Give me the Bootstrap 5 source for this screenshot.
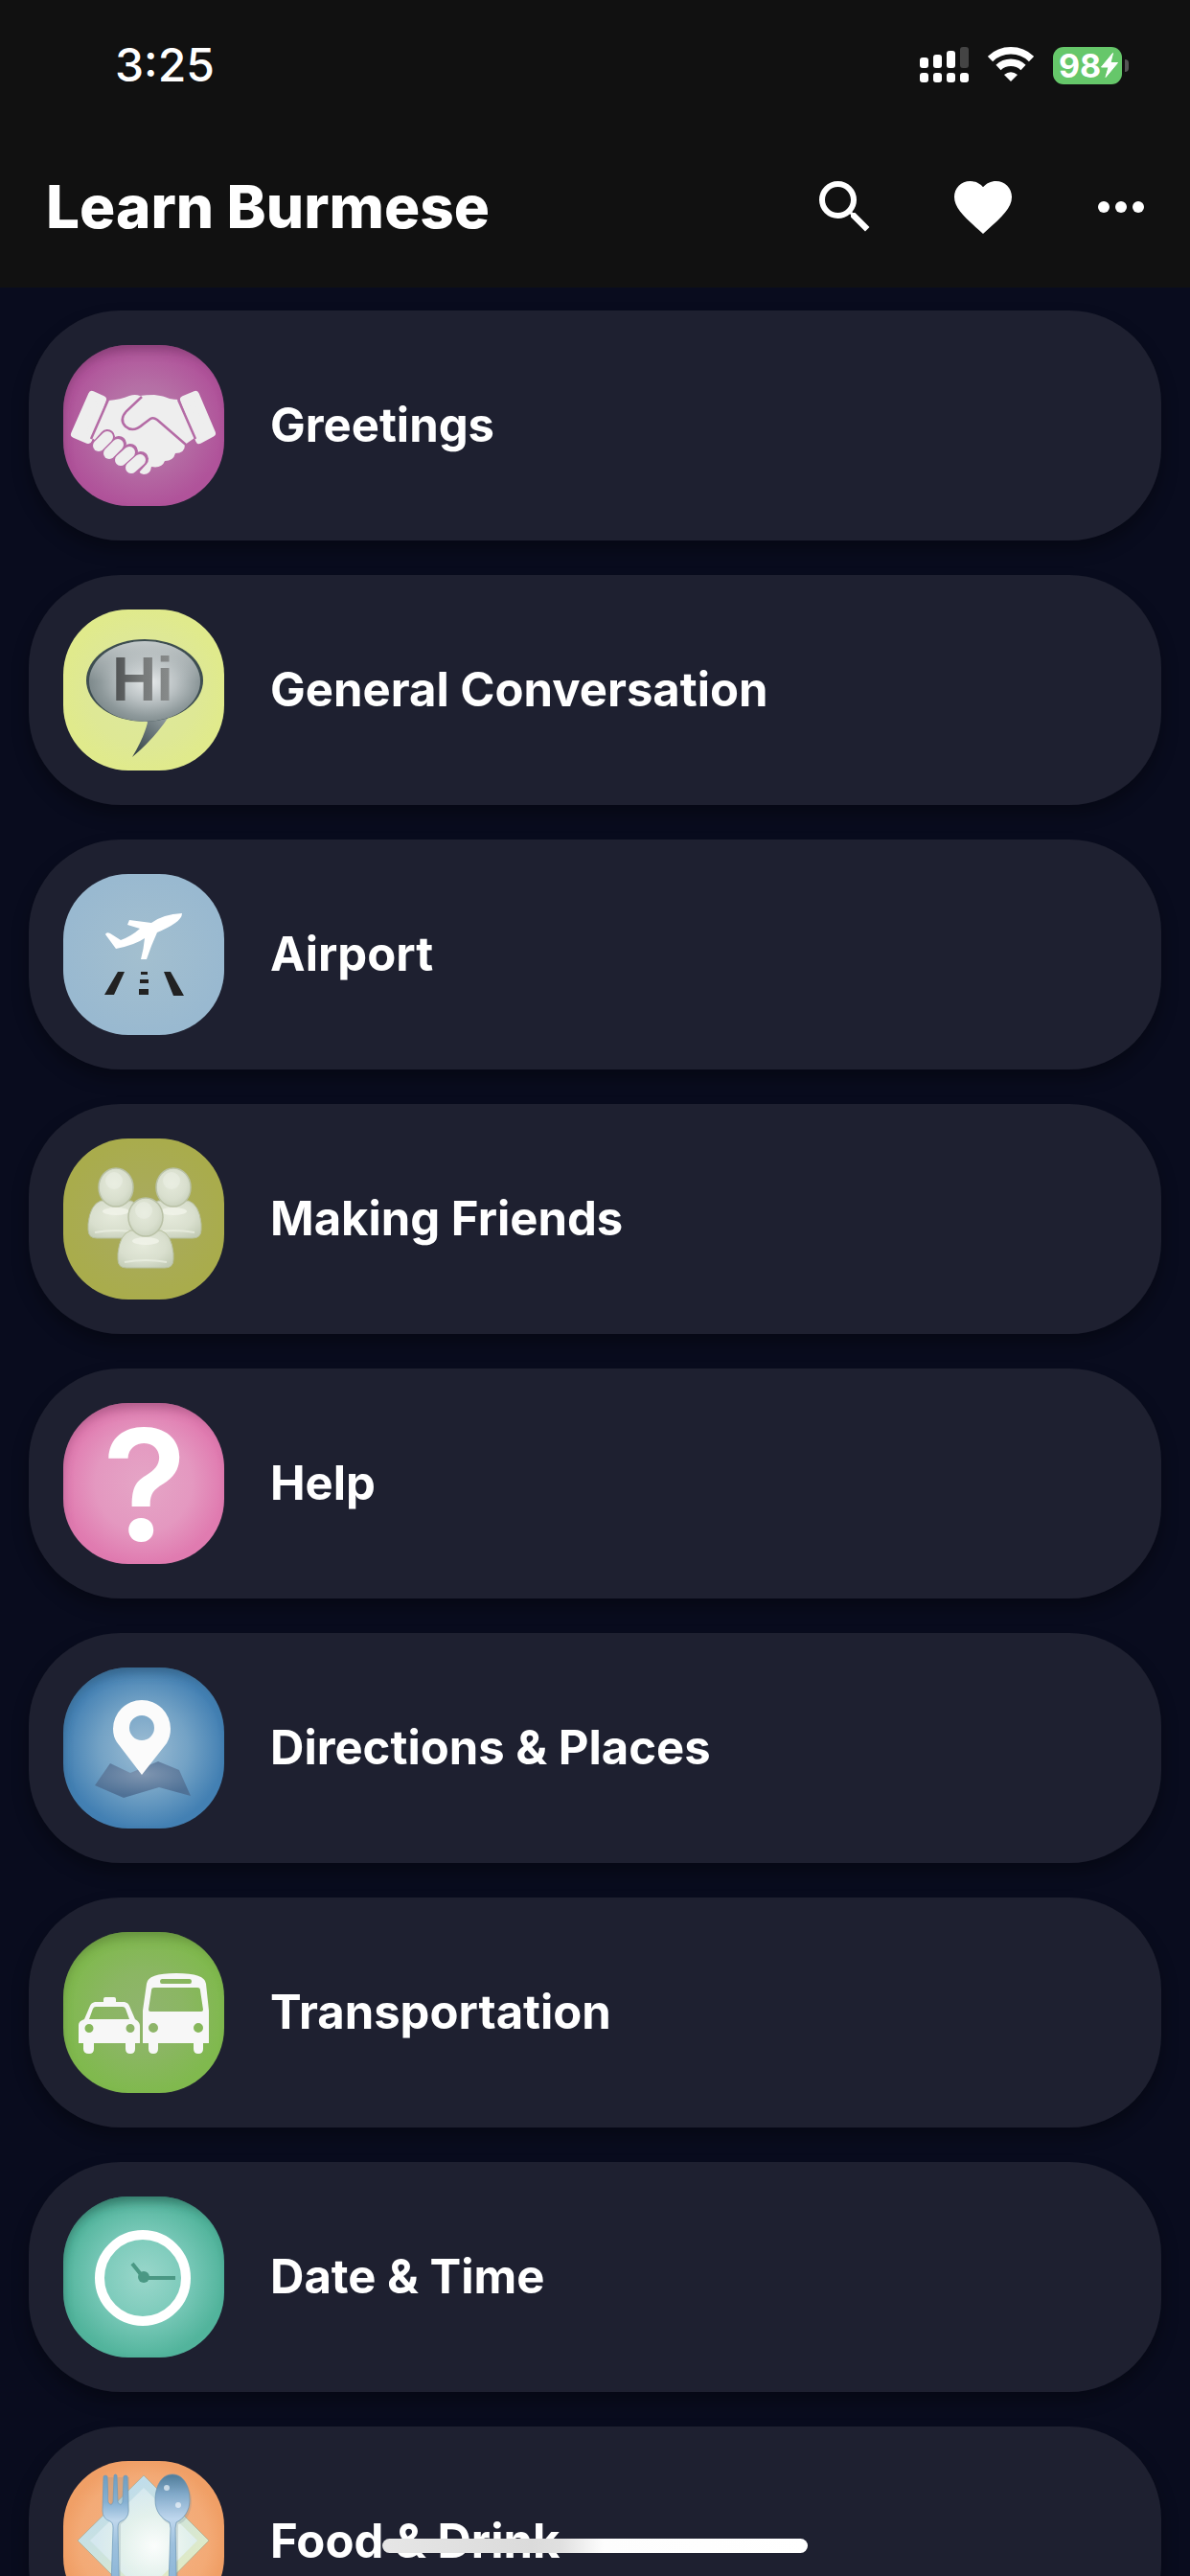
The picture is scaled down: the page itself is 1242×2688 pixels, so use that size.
<!DOCTYPE html>
<html lang="en" data-bs-theme="dark">
<head>
<meta charset="utf-8">
<meta name="viewport" content="width=device-width, initial-scale=1">
<title>Learn Burmese</title>
<link href="https://cdn.jsdelivr.net/npm/bootstrap@5.3.0/dist/css/bootstrap.min.css" rel="stylesheet">
<style>
  body { background: #090c1e; color: #fff; font-family: Inter, "Liberation Sans", sans-serif; }
  .top-area { background: #111; }
  .status-bar { height: 132px; padding: 4px 64px 0 120px; }
  .status-icons { gap: 20px; }
  .clock-text { font-size: 48px; line-height: 60px; font-weight: 500; }
  .battery-level { width: 72px; height: 39px; border-radius: 11px; background: #66c76a; padding-left: 6px; font-size: 34px; line-height: 39px; font-weight: 700; }
  .battery-nub { width: 4px; height: 13px; border-radius: 0 4px 4px 0; background: #555; margin-left: 3px; }
  .app-bar { height: 168px; padding: 0 36px 0 48px; }
  .app-title { font-size: 62px; line-height: 72px; font-weight: 800; }
  .tool-group { gap: 72px; }
  .tool-btn { line-height: 0; color: #fff; }
  .topic-list { gap: 36px; padding: 24px 30px; overflow-y: auto; scrollbar-width: none; }
  .topic-list::-webkit-scrollbar { display: none; }
  .topic { height: 240px; padding: 36px; gap: 48px; border-radius: 96px; background: #1e2030; color: #fff; box-shadow: 0 10px 18px rgba(0, 0, 0, .32); font-size: 49px; line-height: 60px; font-weight: 700; }
  .topic:hover { color: #fff; }
  .topic-icon { width: 168px; height: 168px; border-radius: 68px; overflow: hidden; }
  .home-bar { bottom: 24px; width: 444px; height: 15px; border-radius: 8px; background: linear-gradient(90deg, #e6e6e6, #dbdbdb 35%, #e0e0e0 42%, #fdfdfd 52%, #fff); }
</style>
<script src="https://cdn.jsdelivr.net/npm/bootstrap@5.3.0/dist/js/bootstrap.bundle.min.js"></script>
</head>
<body>
<div class="vh-100 d-flex flex-column overflow-hidden">
  <header class="top-area flex-shrink-0">
    <div class="status-bar d-flex align-items-center justify-content-between">
      <time class="clock-text">3:25</time>
      <div class="status-icons d-flex align-items-center">
        <svg width="51" height="38" viewBox="0 0 51 38" fill="#fff" aria-hidden="true">
          <rect x="0" y="11" width="9" height="11" rx="3"/><rect x="14" y="8" width="9" height="14" rx="3"/><rect x="28" y="4" width="9" height="18" rx="3"/><rect x="42" y="0" width="9" height="22" rx="3" fill="#444"/>
          <rect x="0" y="27" width="9" height="10" rx="3"/><rect x="14" y="27" width="9" height="10" rx="3"/><rect x="28" y="27" width="9" height="10" rx="3"/><rect x="42" y="27" width="9" height="10" rx="3"/>
        </svg>
        <svg width="48" height="38" viewBox="0 0 48 38" aria-hidden="true">
          <path d="M2.500 12.500A31 31 0 0 1 45.500 12.500" fill="none" stroke="#fff" stroke-width="7.500"/>
          <path d="M11 21.500A19 19 0 0 1 37 21.500" fill="none" stroke="#fff" stroke-width="7.500"/>
          <path d="M17 29Q24 23.500 31 29L24 36Z" fill="#fff"/>
        </svg>
        <div class="d-flex align-items-center">
          <div class="battery-level d-flex align-items-center">98<svg class="flex-shrink-0" width="18" height="26" viewBox="0 0 18 26" fill="#fff" aria-hidden="true"><path d="M12.500 0.500L0.500 15H8L5 25.500L17.500 10.500H10Z" stroke="#fff" stroke-linejoin="round"/></svg></div>
          <div class="battery-nub"></div>
        </div>
      </div>
    </div>
    <nav class="app-bar d-flex align-items-center justify-content-between">
      <h1 class="app-title mb-0">Learn Burmese</h1>
      <div class="tool-group d-flex">
        <button type="button" class="tool-btn btn border-0 p-0" aria-label="Search"><svg width="72" height="72" viewBox="0 0 24 24" fill="currentColor"><path d="M15.500 14h-.79l-.28-.27A6.471 6.471 0 0 0 16 9.500 6.500 6.500 0 1 0 9.500 16c1.610 0 3.090-.59 4.230-1.570l.27.28v.79l5 4.990L20.490 19l-4.990-5zm-6 0C7.010 14 5 11.990 5 9.500S7.010 5 9.500 5 14 7.010 14 9.500 11.990 14 9.500 14z"/></svg></button>
        <button type="button" class="tool-btn btn border-0 p-0" aria-label="Favourites"><svg width="72" height="72" viewBox="0 0 24 24" fill="currentColor"><path d="M12 21.350l-1.450-1.320C5.400 15.360 2 12.280 2 8.500 2 5.420 4.420 3 7.500 3c1.740 0 3.410.81 4.500 2.090C13.090 3.810 14.760 3 16.500 3 19.580 3 22 5.420 22 8.500c0 3.780-3.400 6.860-8.550 11.540L12 21.350z"/></svg></button>
        <button type="button" class="tool-btn btn border-0 p-0" aria-label="More"><svg width="72" height="72" viewBox="0 0 24 24" fill="currentColor"><circle cx="6" cy="12" r="2"/><circle cx="12" cy="12" r="2"/><circle cx="18" cy="12" r="2"/></svg></button>
      </div>
    </nav>
  </header>

  <svg class="position-absolute" width="0" height="0" aria-hidden="true">
    <defs>
      <filter id="edgeBlur" x="-20%" y="-20%" width="140%" height="140%"><feGaussianBlur stdDeviation="6"/></filter>
      <clipPath id="tile"><rect width="168" height="168" rx="68"/></clipPath>
      <path id="edge" d="M-30-30H200V200H-30ZM76 5Q0 5 -2 78V108Q0 178 78 178H100Q176 178 176 108V78Q174 5 100 5Z" fill-rule="evenodd" filter="url(#edgeBlur)"/>
      <radialGradient id="gPurple"><stop offset="0" stop-color="#b580ae"/><stop offset=".5" stop-color="#b56fa5"/><stop offset="1" stop-color="#b0539a"/></radialGradient>
      <radialGradient id="gLime"><stop offset="0" stop-color="#dde89e"/><stop offset=".7" stop-color="#dee895"/><stop offset="1" stop-color="#e0ea8c"/></radialGradient>
      <radialGradient id="gSky"><stop offset="0" stop-color="#a3bfcf"/><stop offset="1" stop-color="#99b9d0"/></radialGradient>
      <radialGradient id="gOlive"><stop offset="0" stop-color="#a9aa62"/><stop offset="1" stop-color="#a9ac4c"/></radialGradient>
      <radialGradient id="gPink"><stop offset="0" stop-color="#e5a5c6"/><stop offset=".6" stop-color="#e498c0"/><stop offset="1" stop-color="#e07bb0"/></radialGradient>
      <radialGradient id="gBlue"><stop offset="0" stop-color="#9dbdd4"/><stop offset=".55" stop-color="#73a2c5"/><stop offset="1" stop-color="#4380b3"/></radialGradient>
      <radialGradient id="gGreen"><stop offset="0" stop-color="#90b46e"/><stop offset=".5" stop-color="#8bb663"/><stop offset="1" stop-color="#80b94e"/></radialGradient>
      <radialGradient id="gTeal"><stop offset="0" stop-color="#9ad7cb"/><stop offset=".5" stop-color="#7dcbbb"/><stop offset="1" stop-color="#52b49c"/></radialGradient>
      <radialGradient id="gOrange"><stop offset="0" stop-color="#f5b488"/><stop offset=".8" stop-color="#f3aa76"/><stop offset="1" stop-color="#f09f66"/></radialGradient>
      <radialGradient id="gBubble" cx=".54" cy=".5" r=".55"><stop offset="0" stop-color="#e8ebec"/><stop offset=".45" stop-color="#bac1c3"/><stop offset=".8" stop-color="#8e999b"/><stop offset="1" stop-color="#7c888a"/></radialGradient>
      <linearGradient id="gSheen" x2="0" y2="1"><stop offset="0" stop-color="#c3c9ca"/><stop offset=".5" stop-color="#c3c9ca" stop-opacity="0"/></linearGradient>
      <linearGradient id="gTail" x1=".8" x2="0" y2="1"><stop offset="0" stop-color="#929da0"/><stop offset="1" stop-color="#2c3b40"/></linearGradient>
      <linearGradient id="gHi" x2="1"><stop offset="0" stop-color="#4b4e4f"/><stop offset=".5" stop-color="#777a7a"/><stop offset="1" stop-color="#8a8d8d"/></linearGradient>
      <radialGradient id="gPerson" cx=".45" cy=".4" r=".7"><stop offset="0" stop-color="#e5eadb"/><stop offset=".6" stop-color="#d9dfce"/><stop offset="1" stop-color="#c3ccb6"/></radialGradient>
      <radialGradient id="gMap" cx=".5" cy=".35" r=".6"><stop offset="0" stop-color="#8096b1"/><stop offset="1" stop-color="#4f7196"/></radialGradient>
      <linearGradient id="gPlate" x2=".6" y2="1"><stop offset="0" stop-color="#b4d6f5"/><stop offset=".5" stop-color="#cce3df"/><stop offset="1" stop-color="#e8edbc"/></linearGradient>
      <radialGradient id="gPlateIn" cx=".6" cy=".55" r=".55"><stop offset="0" stop-color="#fbfdfc"/><stop offset=".55" stop-color="#e3f1ec"/><stop offset="1" stop-color="#d5e8ef"/></radialGradient>
      <linearGradient id="gSteel" x2="0" y2="1"><stop offset="0" stop-color="#6f9dc0"/><stop offset=".2" stop-color="#85b0d2"/><stop offset=".33" stop-color="#bfd7ec"/><stop offset=".5" stop-color="#9cc0dd"/><stop offset="1" stop-color="#7fadd2"/></linearGradient>
      <linearGradient id="gSpoon" x2="0" y2="1"><stop offset="0" stop-color="#4f7b98"/><stop offset=".14" stop-color="#81a9c9"/><stop offset=".32" stop-color="#bfd7ee"/><stop offset=".5" stop-color="#9cc0dd"/><stop offset="1" stop-color="#7fadd2"/></linearGradient>
      <g id="person"><path d="M-16 14Q-27 18-29 38V44Q-29 53-20 53H20Q29 53 29 44V38Q27 18 16 14Z" stroke="#b7bf9e" stroke-width="1"/><path d="M-22 47Q0 43 22 47" fill="none" stroke="#edf1e4" stroke-width="2" opacity=".7"/><ellipse cx="0" cy="25" rx="14" ry="4" fill="#f1f4ea" opacity=".8"/><ellipse rx="18" ry="20" stroke="#b9c1a6" stroke-width="1.500"/><ellipse cx="-2" cy="-7" rx="9" ry="9" fill="#eef1e7" opacity=".5"/></g>
    </defs>
  </svg>

  <main class="topic-list d-flex flex-column flex-grow-1">
    <a href="#greetings" class="topic d-flex align-items-center flex-shrink-0 text-decoration-none">
      <svg class="topic-icon flex-shrink-0" viewBox="0 0 168 168" aria-hidden="true">
        <rect width="168" height="168" fill="url(#gPurple)"/><use href="#edge" fill="#5a2a50" opacity=".5"/>
        <g fill="#eee" stroke="#eee" stroke-width="8" stroke-linejoin="round"><path d="M30 52L41 57L26 99L12 93Z"/><path d="M138 52L126 57L142 99L155 92Z"/></g>
        <path fill="#eee" d="M47 58Q60 57 69 53Q75 51 80 53Q86 52 95 52Q105 53 111 56Q116 57 120 57L137 97L127 104Q127 113 117 113Q115 121 106 121Q103 129 92 127Q91 135 84 135Q78 134 80 130L60 118L30 97Z"/>
        <path d="M82 54L66 69Q58 78 65 85Q73 92 83 83L91 77Q94 75 98 78L128 104" fill="none" stroke="#b46ba5" stroke-width="2.500"/>
        <path d="M47 57L29 98M120 57L138 98" fill="none" stroke="#b46ba5" stroke-width="2.500"/>
        <g stroke="#b46ba5" stroke-width="16" stroke-linecap="round"><path d="M46 96L38 105"/><path d="M58 103L49 113"/><path d="M70 111L61 121"/><path d="M81 119L72 129"/></g>
        <g stroke="#eee" stroke-width="12" stroke-linecap="round"><path d="M46 96L37 105"/><path d="M57 104L48 113"/><path d="M69 112L60 120"/><path d="M80 120L71 128"/></g>
      </svg>
      <span>Greetings</span>
    </a>
    <a href="#general-conversation" class="topic d-flex align-items-center flex-shrink-0 text-decoration-none">
      <svg class="topic-icon flex-shrink-0" viewBox="0 0 168 168" aria-hidden="true">
        <rect width="168" height="168" fill="url(#gLime)"/>
        <path d="M87 115L88 118Q84 134 72 154Q96 134 112 109Z" fill="url(#gTail)"/>
        <ellipse cx="85" cy="74" rx="61" ry="43" fill="#3d4d50"/>
        <ellipse cx="85" cy="75" rx="58" ry="42" fill="url(#gBubble)"/><ellipse cx="85" cy="75" rx="58" ry="42" fill="url(#gSheen)"/>
        <text x="51" y="95" font-family="Liberation Sans, sans-serif" font-weight="700" font-size="64" fill="url(#gHi)">Hi</text>
      </svg>
      <span>General Conversation</span>
    </a>
    <a href="#airport" class="topic d-flex align-items-center flex-shrink-0 text-decoration-none">
      <svg class="topic-icon flex-shrink-0" viewBox="0 0 168 168" aria-hidden="true">
        <rect width="168" height="168" fill="url(#gSky)"/>
        <path fill="#fff" d="M44 63Q45 60 49 62L60 69Q71 65 80 57L67 53L69 48L92 51Q104 42 124 41Q124 46 117 51Q110 56 98 61Q92 74 87 89H81Q84 78 85 67Q75 74 55 78Z"/>
        <path fill="#222" d="M57 102H64L53 126H43ZM81 102H88V105H81ZM80 110H89V114H80ZM79 120H89V126H79ZM105 102H112L126 127H115Z"/>
      </svg>
      <span>Airport</span>
    </a>
    <a href="#making-friends" class="topic d-flex align-items-center flex-shrink-0 text-decoration-none">
      <svg class="topic-icon flex-shrink-0" viewBox="0 0 168 168" aria-hidden="true">
        <rect width="168" height="168" fill="url(#gOlive)"/>
        <g fill="url(#gPerson)"><use href="#person" x="55" y="51"/><use href="#person" x="115" y="51"/><use href="#person" x="86" y="82"/></g>
      </svg>
      <span>Making Friends</span>
    </a>
    <a href="#help" class="topic d-flex align-items-center flex-shrink-0 text-decoration-none">
      <svg class="topic-icon flex-shrink-0 overflow-visible" viewBox="0 0 168 168" aria-hidden="true">
        <g clip-path="url(#tile)"><rect width="168" height="168" fill="url(#gPink)"/><use href="#edge" fill="#7a3a60" opacity=".5"/></g>
        <text x="85" y="144" text-anchor="middle" font-family="Inter, sans-serif" font-weight="600" font-size="162" fill="#fff">?</text>
      </svg>
      <span>Help</span>
    </a>
    <a href="#directions" class="topic d-flex align-items-center flex-shrink-0 text-decoration-none">
      <svg class="topic-icon flex-shrink-0" viewBox="0 0 168 168" aria-hidden="true">
        <rect width="168" height="168" fill="url(#gBlue)"/><use href="#edge" fill="#2a4a60" opacity=".5"/>
        <path d="M49 100L70 110L99 98L121 107L133 134L100 125L63 136L33 123Z" fill="url(#gMap)"/>
        <path d="M82 112L56 78Q52 72 52 64A30 30 0 0 1 112 64Q112 72 108 79ZM82 50A13 13 0 1 0 82 76A13 13 0 1 0 82 50Z" fill="#fbfbfb" fill-rule="evenodd"/>
      </svg>
      <span>Directions &amp; Places</span>
    </a>
    <a href="#transportation" class="topic d-flex align-items-center flex-shrink-0 text-decoration-none">
      <svg class="topic-icon flex-shrink-0" viewBox="0 0 168 168" aria-hidden="true">
        <rect width="168" height="168" fill="url(#gGreen)"/><use href="#edge" fill="#48662e" opacity=".5"/>
        <path fill="#f7f7f7" fill-rule="evenodd" d="M16 116V97Q16 93 22 91L28 77Q29 74 33 73L42 73V70Q42 68 44 68H53Q55 68 55 70V73L64 73Q68 74 69 77L75 91Q80 94 80 98V116H75V122Q75 127 70 127Q65 127 65 122V116H32V122Q32 127 27 127Q21 127 21 122V116ZM34 78Q32 78 31 80L27 91H69L65 80Q64 78 62 78ZM27 96A4.500 4.500 0 1 0 27 105A4.500 4.500 0 1 0 27 96ZM70 96A4.500 4.500 0 1 0 70 105A4.500 4.500 0 1 0 70 96Z"/>
        <path fill="#f7f7f7" fill-rule="evenodd" d="M83 116V82L87 54Q88 43 118 43Q148 43 149 54L152 82V116H146V122Q146 127 141 127Q136 127 136 122V116H99V122Q99 127 94 127Q89 127 89 122V116ZM103 49Q101 49 101 51.500Q101 54 103 54H132Q134 54 134 51.500Q134 49 132 49ZM95 58Q92 58 92 61L89 81Q89 83 91 83H144Q146 83 146 81L143 61Q143 58 140 58ZM94 95A5 5 0 1 0 94 105A5 5 0 1 0 94 95ZM141 95A5 5 0 1 0 141 105A5 5 0 1 0 141 95Z"/>
      </svg>
      <span>Transportation</span>
    </a>
    <a href="#date-time" class="topic d-flex align-items-center flex-shrink-0 text-decoration-none">
      <svg class="topic-icon flex-shrink-0" viewBox="0 0 168 168" aria-hidden="true">
        <rect width="168" height="168" fill="url(#gTeal)"/><use href="#edge" fill="#1f4a3f" opacity=".6"/>
        <circle cx="83" cy="85" r="45" fill="none" stroke="#fff" stroke-width="10"/>
        <path d="M72 70L84 85H117" fill="none" stroke="#4a9884" stroke-width="4"/><circle cx="84" cy="84" r="6" fill="#4a9884"/>
      </svg>
      <span>Date &amp; Time</span>
    </a>
    <a href="#food-drink" class="topic d-flex align-items-center flex-shrink-0 text-decoration-none">
      <svg class="topic-icon flex-shrink-0" viewBox="0 0 168 168" aria-hidden="true">
        <rect width="168" height="168" fill="url(#gOrange)"/>
        <path d="M84 15L152 83L84 152L15 83Z" fill="url(#gPlate)" stroke="#a9a98c" stroke-width=".7"/>
        <path d="M84 28L140 83L84 139L28 83Z" fill="url(#gPlateIn)"/>
        <g fill="#7d8f99" opacity=".25"><path d="M44 17H69V52Q68 60 60 66V150H53V66Z"/><ellipse cx="116" cy="42" rx="18" ry="25"/><path d="M114 64H120V150H114Z"/></g>
        <path d="M42 16Q44 14 46 16L47 43Q50 48 52 43L53 15Q54 13 56 15L57 43Q60 48 62 43L63 16Q65 14 67 16L68 52Q68 60 60 63Q57 64 57 70L59 160H49L52 70Q52 64 49 63Q41 60 41 52Z" fill="url(#gSteel)" stroke="#6d99ba" stroke-width=".7"/>
        <path d="M114 14C127 14 132 29 132 41C132 52 126 60 118 64L117 70L119 160H109L112 70L111 64C102 60 96 52 96 41C96 29 101 14 114 14Z" fill="url(#gSpoon)" stroke="#6792b1" stroke-width=".7"/>
        <circle cx="108" cy="28" r="3" fill="#eef5fa" opacity=".7"/><circle cx="120" cy="46" r="3" fill="#fff" opacity=".6"/>
      </svg>
      <span>Food &amp; Drink</span>
    </a>
  </main>
</div>
<div class="home-bar position-fixed start-50 translate-middle-x"></div>
</body>
</html>
